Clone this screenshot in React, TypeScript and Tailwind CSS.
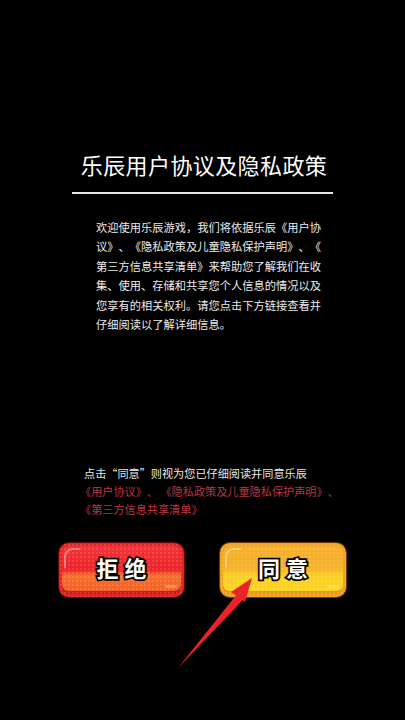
const cjk = "font-['Noto_Sans_CJK_SC','Noto_Sans',sans-serif] [text-spacing-trim:space-all]";

function GameButton({ label, tone }: { label: [string, string]; tone: "red" | "yellow" }) {
  const face =
    tone === "red"
      ? "bg-[linear-gradient(180deg,#f2353a_0%,#ec2428_50%,#f5702c_60%,#f25a22_100%)] border-[#5a0a08] shadow-[inset_0_0_0_3px_#e22226,inset_0_-3px_0_3px_#c81c18]"
      : "bg-[linear-gradient(180deg,#f6ae2c_0%,#f5b22a_48%,#fbcf24_60%,#fcd61e_100%)] border-[#6a3a04] shadow-[inset_0_0_0_3px_#f0a222,inset_0_-3px_0_3px_#e89a1a]";
  return (
    <div
      className={`relative h-[56px] rounded-[11px] border ${face} flex items-center justify-center gap-[6px] overflow-hidden`}
    >
      <div className="absolute inset-0 bg-[radial-gradient(rgba(255,255,255,0.12)_1px,transparent_1.2px)] bg-[length:4px_4px]" />
      <div className="absolute left-[5px] top-[5px] w-[16px] h-[20px] rounded-tl-[9px] border-l-[2px] border-t-[2px] border-white/35" />
      <div className="absolute right-[7px] bottom-[9px] w-[12px] h-[3px] rounded-full bg-white/25" />
      {label.map((c) => (
        <span
          key={c}
          className={`relative -top-[3px] ${cjk} text-[22px] leading-none font-bold text-white [-webkit-text-stroke:3.5px_#000] [paint-order:stroke_fill]`}
        >
          {c}
        </span>
      ))}
    </div>
  );
}

export default function App() {
  return (
    <div className={`relative w-[405px] h-[720px] bg-black overflow-hidden ${cjk}`}>
      <div className="pt-[150px] flex flex-col">
        <h1 className="text-center text-[22px] leading-[28px] font-normal text-white tracking-[0.4px] pl-[3px]">
          乐辰用户协议及隐私政策
        </h1>
        <div className="mt-[14px] mx-[72px] h-[1.5px] bg-[#e6e6e6]" />

        <p className="mt-[24px] ml-[96px] text-[11.25px] leading-[19.6px] text-[#ececec] whitespace-nowrap">
          欢迎使用乐辰游戏，我们将依据乐辰《用户协
          <br />
          议》、《隐私政策及儿童隐私保护声明》、《
          <br />
          第三方信息共享清单》来帮助您了解我们在收
          <br />
          集、使用、存储和共享您个人信息的情况以及
          <br />
          您享有的相关权利。请您点击下方链接查看并
          <br />
          仔细阅读以了解详细信息。
        </p>

        <div className="mt-[129px] ml-[84px] text-[11.15px] leading-[18px] whitespace-nowrap">
          <div className="text-[#e8e8e8]">点击“同意”则视为您已仔细阅读并同意乐辰</div>
          <div className="text-[#bb3540] -ml-[4px]">
            《用户协议》、&nbsp;《隐私政策及儿童隐私保护声明》、
          </div>
          <div className="text-[#bb3540] -ml-[4px]">《第三方信息共享清单》</div>
        </div>

        <div className="mt-[24px] pl-[58px] flex gap-[34px]">
          <div className="w-[127px]">
            <GameButton label={["拒", "绝"]} tone="red" />
          </div>
          <div className="w-[128px]">
            <GameButton label={["同", "意"]} tone="yellow" />
          </div>
        </div>
      </div>

      <svg className="absolute left-0 top-0 pointer-events-none" width="405" height="720" viewBox="0 0 405 720">
        <path d="M178 668 L237 594 L243 600 Z" fill="#e8232b" />
        <path d="M252 578 L231 592 L245 602 Z" fill="#e8232b" />
      </svg>
    </div>
  );
}
